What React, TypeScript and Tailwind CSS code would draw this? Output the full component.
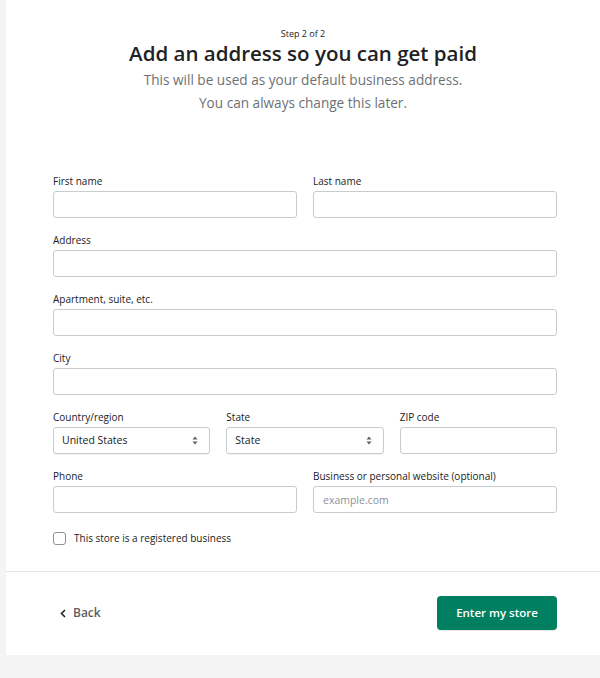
import React from 'react';

const font = { fontFamily: '"Open Sans", "Noto Sans", Arial, sans-serif' };

function Field({ label, placeholder }: { label: string; placeholder?: string }) {
  return (
    <label className="flex flex-col">
      <span className="text-[10px] leading-[12px] text-[#202223]">{label}</span>
      <input
        className="mt-[4px] h-[27px] rounded-[3px] border border-[#c9cccf] bg-white px-[9px] text-[10.5px] text-[#202223] outline-none placeholder:text-[#8c9196]"
        placeholder={placeholder}
      />
    </label>
  );
}

function SelectField({ label, value }: { label: string; value: string }) {
  return (
    <label className="flex flex-col">
      <span className="text-[10px] leading-[12px] text-[#202223]">{label}</span>
      <div className="mt-[4px] flex h-[27px] items-center justify-between rounded-[3px] border border-[#c9cccf] bg-white pl-[8px] pr-[11px] text-[10.5px] text-[#202223] shadow-[0_1px_0_rgba(0,0,0,0.05)]">
        <span>{value}</span>
        <svg width="6" height="9" viewBox="0 0 6 9" className="fill-[#5c5f62]">
          <path d="M3 0.5 L5.5 3.5 H0.5 Z" />
          <path d="M3 8.5 L5.5 5.5 H0.5 Z" />
        </svg>
      </div>
    </label>
  );
}

export default function App() {
  return (
    <div className="min-h-[678px] bg-[#f4f4f5] pl-[6px]" style={font}>
      <div className="h-[655px] bg-white">
        <div className="h-[572px] border-b border-[#e4e5e7] pt-[28px]">
          <div className="text-center">
            <div className="text-[9px] leading-[12px] text-[#202223]">Step 2 of 2</div>
            <h1 className="text-[20.5px] font-semibold leading-[26px] text-[#202223]">
              Add an address so you can get paid
            </h1>
            <p className="mt-[2px] text-[13.6px] leading-[23px] text-[#6d7175]">
              This will be used as your default business address.
              <br />
              You can always change this later.
            </p>
          </div>

          <div className="ml-[47px] mt-[61px] flex w-[504px] flex-col gap-[16px]">
            <div className="grid grid-cols-2 gap-[16px]">
              <Field label="First name" />
              <Field label="Last name" />
            </div>
            <Field label="Address" />
            <Field label="Apartment, suite, etc." />
            <Field label="City" />
            <div className="grid grid-cols-3 gap-[16px]">
              <SelectField label="Country/region" value="United States" />
              <SelectField label="State" value="State" />
              <Field label="ZIP code" />
            </div>
            <div className="grid grid-cols-2 gap-[16px]">
              <Field label="Phone" />
              <Field label="Business or personal website (optional)" placeholder="example.com" />
            </div>
            <label className="mt-[2px] flex items-center gap-[8px]">
              <span className="h-[13px] w-[13px] rounded-[3px] border border-[#8c9196] bg-white" />
              <span className="text-[10px] leading-[14px] text-[#202223]">
                This store is a registered business
              </span>
            </label>
          </div>
        </div>

        <div className="flex h-[82px] items-center justify-between pl-[54px] pr-[43px]">
          <button className="flex items-center gap-[7px] text-[12px] font-semibold text-[#5c5f62]">
            <svg width="6" height="9" viewBox="0 0 6 9" fill="none" stroke="#202223" strokeWidth="1.6">
              <path d="M5 1 L1.5 4.5 L5 8" />
            </svg>
            Back
          </button>
          <button className="h-[34px] w-[120px] rounded-[4px] bg-[#008060] text-[11.5px] font-semibold text-white shadow-[0_1px_0_rgba(0,0,0,0.08)]">
            Enter my store
          </button>
        </div>
      </div>
    </div>
  );
}
